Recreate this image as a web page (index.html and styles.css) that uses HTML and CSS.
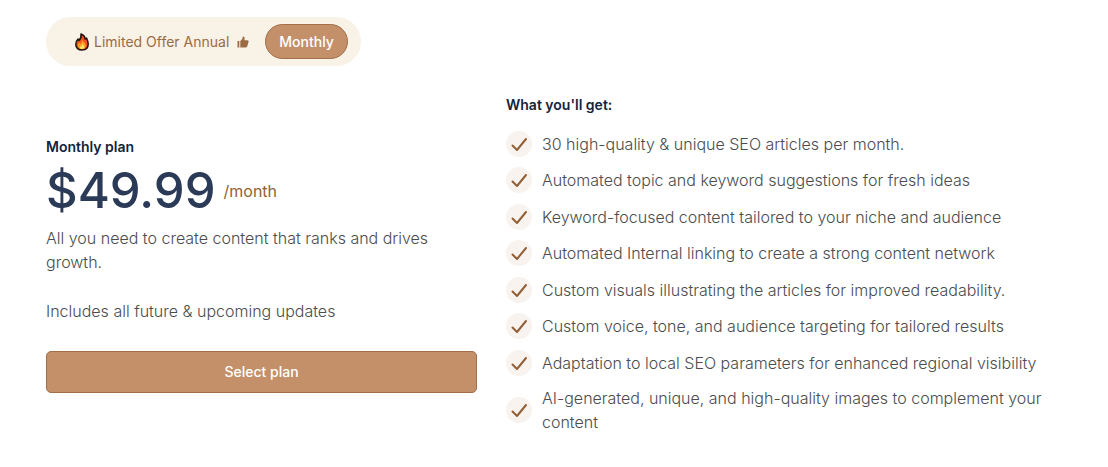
FILE: index.html
```html
<!DOCTYPE html>
<html lang="en">
<head>
<meta charset="utf-8">
<meta name="viewport" content="width=device-width, initial-scale=1">
<title>Monthly plan</title>
<link rel="stylesheet" href="styles.css">
</head>
<body>
<svg class="sprite" aria-hidden="true">
  <symbol id="check" viewBox="0 0 26 26">
    <path d="M6.500 14.500L11 19L20 8" fill="none" stroke="currentColor" stroke-width="2" stroke-linecap="round" stroke-linejoin="round"/>
  </symbol>
</svg>
<main class="pricing">
  <div class="toggle" role="group" aria-label="Billing period">
    <button class="toggle-option" type="button" aria-pressed="false">
      <svg class="flame" viewBox="0 0 14 18" aria-hidden="true">
        <path d="M6 1C9 2 10 4 10 6L11.500 5C12.500 7 13.200 9 13.200 11C13.200 15 10.500 17 7 17C3.500 17 .8 15 .8 11.500C.8 9 2 7 3 6L4 7.500C5.500 6 6.500 4 6 1Z" fill="#f2501d" stroke="#20130f" stroke-width="1.500" stroke-linejoin="round"/>
        <path d="M7 6C7.500 9 10.500 9 10.800 12C11 15 9 16 7 16C4.500 16 2.800 14.500 3 12C3.200 10 4 9.500 4.500 9.500L5.500 11C6.500 9.500 7.200 8 7 6Z" fill="#ff9a24"/>
        <path d="M7.200 10.500C7.500 12 9.500 12 9.300 14C9.200 15.500 8 16 7 16C5.500 16 4.500 15.200 4.700 13.500L5.800 13.800C6.800 13 7.200 12 7.200 10.500Z" fill="#ffe36a"/>
      </svg>
      <span>Limited Offer Annual</span>
      <svg class="thumb" viewBox="0 0 12 12" aria-hidden="true">
        <path d="M.5 5H2.300V11.500H.5ZM3.300 5L5.500 2.800V1.200C5.500.6 6 .3 6.500.4C7.800.8 7.900 2.500 7.300 4.300H10.300C11.300 4.300 11.800 5.100 11.500 6L10.300 10.300C10.100 11 9.500 11.500 8.700 11.500H3.300Z" fill="currentColor"/>
      </svg>
    </button>
    <button class="toggle-option toggle-active" type="button" aria-pressed="true">Monthly</button>
  </div>
  <div class="columns">
    <section class="plan">
      <h2 class="heading">Monthly plan</h2>
      <p class="price"><span class="amount">$49.99</span><span class="period">/month</span></p>
      <p class="text">All you need to create content that ranks and drives growth.</p>
      <p class="text note">Includes all future &amp; upcoming updates</p>
      <button class="select" type="button">Select plan</button>
    </section>
    <section class="benefits">
      <h2 class="heading">What you'll get:</h2>
      <ul class="list">
        <li class="item"><svg class="check" aria-hidden="true"><use href="#check"/></svg><span>30 high-quality &amp; unique SEO articles per month.</span></li>
        <li class="item"><svg class="check" aria-hidden="true"><use href="#check"/></svg><span>Automated topic and keyword suggestions for fresh ideas</span></li>
        <li class="item"><svg class="check" aria-hidden="true"><use href="#check"/></svg><span>Keyword-focused content tailored to your niche and audience</span></li>
        <li class="item"><svg class="check" aria-hidden="true"><use href="#check"/></svg><span>Automated Internal linking to create a strong content network</span></li>
        <li class="item"><svg class="check" aria-hidden="true"><use href="#check"/></svg><span>Custom visuals illustrating the articles for improved readability.</span></li>
        <li class="item"><svg class="check" aria-hidden="true"><use href="#check"/></svg><span>Custom voice, tone, and audience targeting for tailored results</span></li>
        <li class="item"><svg class="check" aria-hidden="true"><use href="#check"/></svg><span>Adaptation to local SEO parameters for enhanced regional visibility</span></li>
        <li class="item"><svg class="check" aria-hidden="true"><use href="#check"/></svg><span>AI-generated, unique, and high-quality images to complement your content</span></li>
      </ul>
    </section>
  </div>
</main>
</body>
</html>
```
FILE: styles.css
```css
* {
  box-sizing: border-box;
}

body {
  margin: 0;
  background: #fff;
  color: #4a4c4e;
  font: 300 16px/24px Inter, "Liberation Sans", sans-serif;
}

h2, p, ul {
  margin: 0;
  padding: 0;
}

button {
  font: inherit;
  cursor: pointer;
}

.sprite {
  position: absolute;
  width: 0;
  height: 0;
}

.pricing {
  padding: 17px 46px 32px;
}

.toggle {
  display: inline-flex;
  align-items: center;
  padding: 7px 13px;
  border-radius: 25px;
  background: #f9f2e7;
}

.toggle-option {
  display: flex;
  align-items: center;
  height: 35px;
  padding: 0 13px;
  border: 1px solid transparent;
  border-radius: 18px;
  background: none;
  color: #9b6b43;
  font-size: 14px;
  font-weight: 400;
}

.toggle-active {
  border-color: #a06f49;
  background: #c4906a;
  color: #fff;
  font-weight: 500;
}

.flame {
  width: 14px;
  height: 18px;
  margin: 0 5px 0 2px;
}

.thumb {
  width: 12px;
  height: 12px;
  margin: 0 2px 0 8px;
}

.columns {
  display: grid;
  grid-template-columns: 431fr 556fr;
  gap: 29px;
  align-items: center;
  margin-top: 27px;
}

.heading {
  color: #13243b;
  font-size: 14px;
  font-weight: 600;
  line-height: 24px;
}

.price {
  display: flex;
  align-items: center;
  gap: 8px;
  margin: 3px 0 6px;
}

.amount {
  color: #2b3b57;
  font-size: 49px;
  font-weight: 500;
  line-height: 58px;
}

.period {
  color: #946238;
  font-weight: 400;
}

.note {
  margin-top: 25px;
}

.select {
  width: 100%;
  height: 42px;
  margin-top: 28px;
  border: 1px solid #a06f49;
  border-radius: 5px;
  background: #c4906a;
  color: #fff;
  font-size: 14px;
  font-weight: 500;
}

.list {
  display: flex;
  flex-direction: column;
  justify-content: space-between;
  min-height: 303px;
  margin-top: 14px;
  list-style: none;
}

.item {
  display: flex;
  align-items: center;
  gap: 10px;
}

.check {
  flex: none;
  width: 26px;
  height: 26px;
  border-radius: 50%;
  background: #f9f3ef;
  color: #925f36;
}
```
